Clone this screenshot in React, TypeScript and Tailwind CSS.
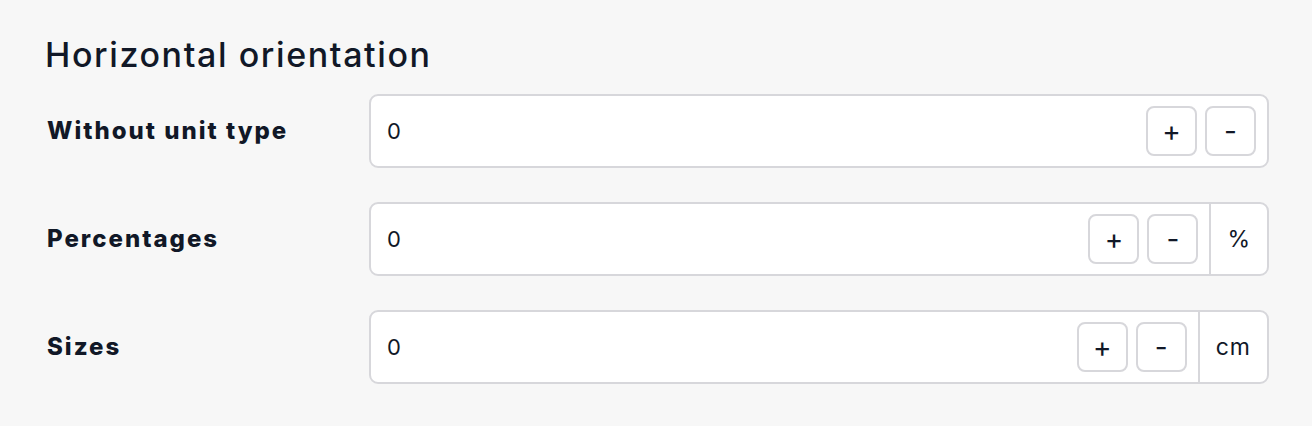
import React from "react";

interface Row {
  label: string;
  unit?: string;
}

const ROWS: Row[] = [
  { label: "Without unit type" },
  { label: "Percentages", unit: "%" },
  { label: "Sizes", unit: "cm" },
];

function StepButton({ children }: { children: React.ReactNode }) {
  return (
    <button
      type="button"
      className="flex h-[50px] w-[51px] items-center justify-center rounded-[8px] border-2 border-[#d7d7db] bg-white text-[28px] leading-none text-[#111827]"
    >
      {children}
    </button>
  );
}

function NumberField({ unit }: { unit?: string }) {
  return (
    <div className="flex h-[74px] flex-1 items-stretch rounded-[9px] border-2 border-[#d7d7db] bg-white">
      <input
        defaultValue="0"
        className="min-w-0 flex-1 bg-transparent pl-[16px] text-[22px] text-[#111827] outline-none"
      />
      <div className="flex items-center gap-[8px] pr-[11px]">
        <StepButton>+</StepButton>
        <StepButton>-</StepButton>
      </div>
      {unit && (
        <div className="flex items-center border-l-2 border-[#d7d7db] px-[16px] text-[23px] tracking-[1px] text-[#111827]">
          {unit}
        </div>
      )}
    </div>
  );
}

export default function App() {
  return (
    <div
      className="min-h-[426px] w-full bg-[#f7f7f7] pl-[45px] pr-[43px] pt-[32px] text-[#111827]"
      style={{ fontFamily: "Inter, 'Noto Sans', sans-serif" }}
    >
      <h2 className="text-[34px] font-medium leading-[46px] tracking-[1.6px]">
        Horizontal orientation
      </h2>
      <div className="mt-[16px] flex flex-col gap-[34px]">
        {ROWS.map((row) => (
          <div key={row.label} className="flex items-center">
            <label className="w-[324px] shrink-0 pl-[2px] text-[24px] font-extrabold tracking-[2px]">
              {row.label}
            </label>
            <NumberField unit={row.unit} />
          </div>
        ))}
      </div>
    </div>
  );
}
